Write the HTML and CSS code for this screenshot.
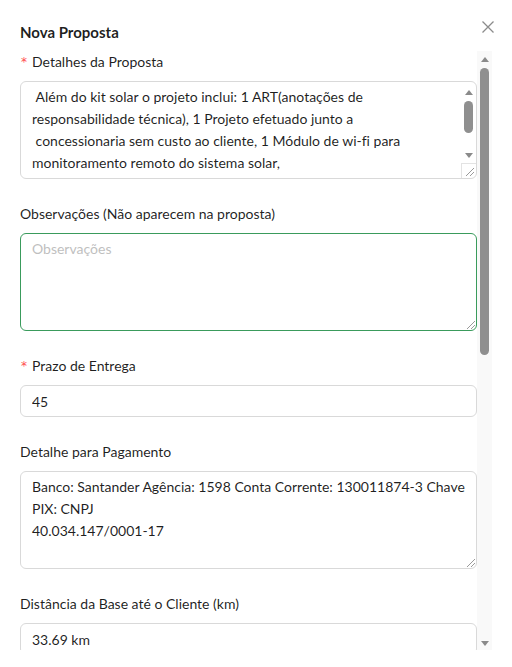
FILE: index.html
```html
<!DOCTYPE html>
<html lang="pt-BR">
<head>
<meta charset="utf-8">
<title>Nova Proposta</title>
<link rel="stylesheet" href="styles.css">
</head>
<body>
<div class="modal">
  <div class="modal-header">
    <h2 class="modal-title">Nova Proposta</h2>
    <button class="modal-close" type="button" aria-label="Fechar">
      <svg width="12" height="12" viewBox="0 0 12 12"><path d="M0.5 0.5L11.5 11.5M11.5 0.5L0.5 11.5" stroke="#8c8c8c" stroke-width="1.3" fill="none"/></svg>
    </button>
  </div>
  <div class="modal-body">
    <form class="form">
      <div class="form-item">
        <label class="form-label required">Detalhes da Proposta</label>
        <div class="control">
          <textarea class="textarea with-scroll" rows="4"> Além do kit solar o projeto inclui: 1 ART(anotações de
responsabilidade técnica), 1 Projeto efetuado junto a
 concessionaria sem custo ao cliente, 1 Módulo de wi-fi para
monitoramento remoto do sistema solar,
 garantia de 12 anos no inversor, 25 anos de
eficiência nos módulos fotovoltaicos e
 instalação completa com estrutura de fixação,
cabos, conectores e proteções elétricas.</textarea>
          <div class="mini-scrollbar">
            <span class="arrow arrow-up"></span>
            <span class="mini-thumb"></span>
            <span class="arrow arrow-down"></span>
          </div>
          <span class="resize-corner"><span class="grip"></span></span>
        </div>
      </div>

      <div class="form-item">
        <label class="form-label">Observações (Não aparecem na proposta)</label>
        <div class="control">
          <textarea class="textarea active" rows="4" placeholder="Observações"></textarea>
          <span class="grip grip-free"></span>
        </div>
      </div>

      <div class="form-item">
        <label class="form-label required">Prazo de Entrega</label>
        <input class="input" type="text" value="45">
      </div>

      <div class="form-item">
        <label class="form-label">Detalhe para Pagamento</label>
        <div class="control">
          <textarea class="textarea" rows="4">Banco: Santander Agência: 1598 Conta Corrente: 130011874-3 Chave
PIX: CNPJ
40.034.147/0001-17</textarea>
          <span class="grip grip-free"></span>
        </div>
      </div>

      <div class="form-item">
        <label class="form-label">Distância da Base até o Cliente (km)</label>
        <input class="input" type="text" value="33.69 km">
      </div>
    </form>
    <div class="scrollbar">
      <span class="arrow arrow-up"></span>
      <span class="thumb"></span>
      <span class="arrow arrow-down"></span>
    </div>
  </div>
</div>
</body>
</html>
```

FILE: styles.css
```css
* { box-sizing: border-box; }

body {
  margin: 0;
  background: #fff;
  color: rgba(0, 0, 0, 0.88);
  font-family: Lato, "Open Sans", sans-serif;
  font-size: 14px;
  line-height: 22px;
  font-variant-ligatures: none;
}

.modal {
  position: relative;
  width: 512px;
  height: 667px;
}

.modal-header {
  padding: 20px 20px 7px;
}

.modal-title {
  margin: 0;
  font-size: 15px;
  line-height: 24px;
  font-weight: 700;
}

.modal-close {
  position: absolute;
  top: 21px;
  right: 18px;
  width: 12px;
  height: 12px;
  padding: 0;
  border: 0;
  background: none;
  display: flex;
}

.modal-body {
  position: relative;
  margin-left: 20px;
  width: 472px;
  height: 599px;
  overflow: hidden;
}

.form {
  width: 457px;
}

.form-item {
  margin-bottom: 24px;
}

.form-label {
  display: block;
  height: 30px;
  padding-bottom: 8px;
  font-size: 14px;
  line-height: 22px;
}

.required::before {
  content: "*";
  display: inline-block;
  width: 8px;
  margin-right: 4px;
  color: #ff4d4f;
  font-family: "DejaVu Sans", sans-serif;
  font-size: 12px;
  line-height: 1;
  text-align: center;
  vertical-align: 1px;
}

.control {
  position: relative;
}

.textarea,
.input {
  display: block;
  width: 100%;
  margin: 0;
  padding: 4px 11px;
  border: 1px solid #d9d9d9;
  border-radius: 6px;
  background: #fff;
  color: rgba(0, 0, 0, 0.88);
  font-family: inherit;
  font-size: 14px;
  line-height: 22px;
  font-variant-ligatures: none;
  outline: none;
}

.textarea {
  height: 98px;
  resize: none;
  overflow: hidden;
}

.input {
  height: 32px;
}

.textarea::placeholder {
  color: #bfbfbf;
}

.textarea.active {
  border-color: #3a9b5c;
}

.textarea.with-scroll {
  padding-right: 26px;
}

/* textarea's own scrollbar */
.mini-scrollbar {
  position: absolute;
  top: 1px;
  right: 1px;
  width: 15px;
  height: 81px;
  display: flex;
  flex-direction: column;
  align-items: center;
  padding-top: 8px;
  border-top-right-radius: 5px;
}

.mini-thumb {
  display: block;
  width: 9px;
  height: 32px;
  margin-top: 6px;
  border-radius: 5px;
  background: #8f8f8f;
}

.mini-scrollbar .arrow-down {
  margin-top: auto;
  margin-bottom: 5px;
}

.resize-corner {
  position: absolute;
  right: 1px;
  bottom: 1px;
  width: 15px;
  height: 15px;
  border-left: 1px solid #e3e3e3;
  border-top: 1px solid #e3e3e3;
  border-bottom-right-radius: 5px;
}

.grip {
  position: absolute;
  right: 2px;
  bottom: 2px;
  width: 8px;
  height: 8px;
  background:
    linear-gradient(135deg, transparent 45%, #9a9a9a 45%, #9a9a9a 55%, transparent 55%) 0 0 / 8px 8px no-repeat,
    linear-gradient(135deg, transparent 45%, #9a9a9a 45%, #9a9a9a 55%, transparent 55%) 4px 4px / 4px 4px no-repeat;
}

.grip-free {
  right: 2px;
  bottom: 2px;
}

/* modal body scrollbar */
.scrollbar {
  position: absolute;
  top: 0;
  right: 0;
  width: 15px;
  height: 100%;
  background: #f9f9f9;
  display: flex;
  flex-direction: column;
  align-items: center;
  padding-top: 6px;
}

.arrow {
  display: block;
  width: 0;
  height: 0;
  border-left: 4px solid transparent;
  border-right: 4px solid transparent;
}

.arrow-up {
  border-bottom: 5px solid #8a8a8a;
}

.arrow-down {
  border-top: 5px solid #8a8a8a;
}

.thumb {
  display: block;
  width: 9px;
  height: 287px;
  margin-top: 6px;
  border-radius: 5px;
  background: #8f8f8f;
}

.scrollbar .arrow-down {
  margin-top: auto;
  margin-bottom: 4px;
}
```
